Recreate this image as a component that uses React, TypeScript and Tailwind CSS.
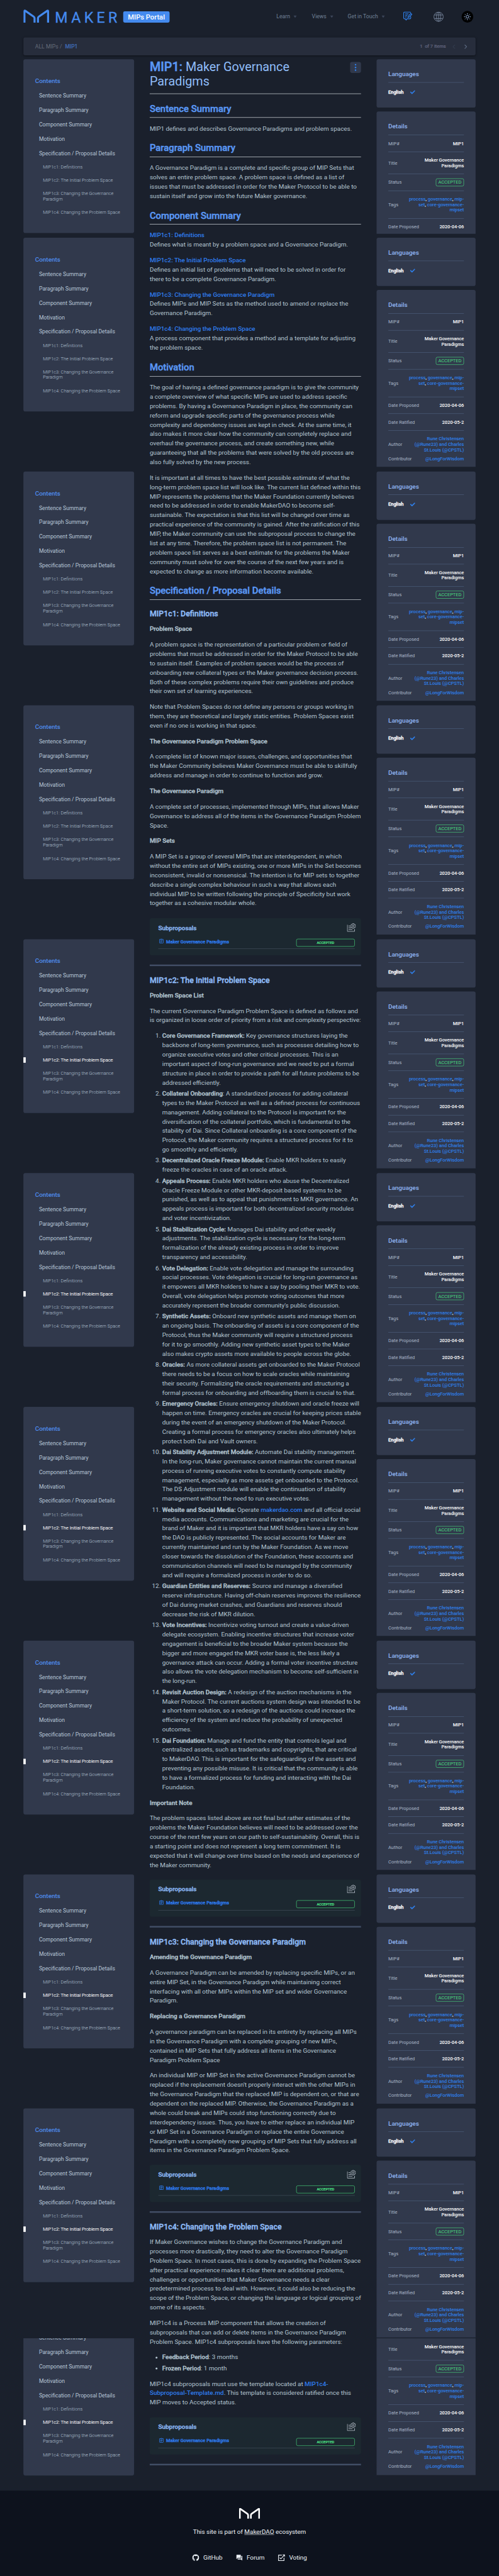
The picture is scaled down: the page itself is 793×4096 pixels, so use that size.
import React from "react";
import { FaCheck, FaGithub } from "react-icons/fa";
import { MdOutlineAssignment, MdForum } from "react-icons/md";

const faux = "font-medium [-webkit-text-stroke:0.5px_currentColor]";

function MakerMark({ className }: { className: string }) {
  return (
    <svg viewBox="0 0 66 34" className={className} fill="none" stroke="currentColor" strokeWidth="5.2">
      <path d="M2.7 34V4.600Q2.700 2.300 4.700 3.600L26.500 18.800Q28.600 20.300 28.600 22.800V34" />
      <path d="M63.300 34V4.600Q63.300 2.300 61.300 3.600L39.500 18.800Q37.400 20.300 37.400 22.800V34" />
    </svg>
  );
}

function NavItem({ label, className }: { label: string; className: string }) {
  return (
    <div className={`flex items-center whitespace-nowrap text-[14px] leading-[20px] text-[#718096] ${className}`}>
      {label}
      <span className="ml-[9px] mt-[2px] h-0 w-0 border-x-[4px] border-t-[6px] border-x-transparent border-t-[#3c4559]" />
    </div>
  );
}

function Header() {
  return (
    <header className="flex h-[96px] items-start pl-[60px]">
      <MakerMark className="mt-[24px] h-[34px] w-[66px] text-[#448aee]" />
      <div className="ml-[15px] mt-[22.600px] w-[175px] whitespace-nowrap text-[37.500px] leading-[45px] tracking-[8.600px] text-[#448aee] [-webkit-text-stroke:0.6px_currentColor]">
        MAKER
      </div>
      <div className="mt-[29px] flex h-[29px] w-[119px] items-center justify-center rounded-[4px] bg-[#448aee] text-[18px] font-medium whitespace-nowrap text-white">
        MIPs Portal
      </div>
      <NavItem label="Learn" className="mt-[32px] ml-[274px] w-[91px]" />
      <NavItem label="Views" className="mt-[32px] w-[92px]" />
      <NavItem label="Get in Touch" className="mt-[32px] w-[142px]" />
      <svg viewBox="0 0 24 24" className="mt-[30px] h-[23px] w-[24px] text-[#2f80ed]" fill="none" stroke="currentColor" strokeWidth="1.9">
        <path d="M20 3.4Q20 1 17.600 1H3.400Q1 1 1 3.400V16.600Q1 19 3.400 19H5.500L7.500 22.500L10 19H17.600Q20 19 20 16.600V13" />
        <path d="M5 6H14M5 10H11M5 14H9" />
        <path d="M13 12.500L20 4.500L23 7L16 14.500L12.500 15.500Z" />
      </svg>
      <svg viewBox="0 0 26 26" className="mt-[30px] ml-[54px] h-[26px] w-[26px] text-[#718096]" fill="none" stroke="currentColor" strokeWidth="1.6">
        <circle cx="13" cy="13" r="12" />
        <ellipse cx="13" cy="13" rx="5.500" ry="12" />
        <path d="M13 1V25M2.500 8.500H23.500M2.500 17.500H23.500" />
      </svg>
      <div className="mt-[28px] ml-[46px] flex h-[30px] w-[30px] items-center justify-center rounded-full bg-black">
        <svg viewBox="0 0 18 18" className="h-[18px] w-[18px] text-[#a9c7f7]" fill="none" stroke="currentColor" strokeWidth="1.5">
          <circle cx="9" cy="9" r="3.500" />
          <path d="M9 0V3M9 15V18M0 9H3M15 9H18M2.600 2.600L4.600 4.600M13.400 13.400L15.400 15.400M2.600 15.400L4.600 13.400M13.400 4.600L15.400 2.600" />
        </svg>
      </div>
    </header>
  );
}

function Breadcrumb() {
  return (
    <div className="mx-[60px] flex h-[46px] items-center rounded-[4px] bg-[#272d3c] pl-[30px] shadow-[0_1px_5px_rgba(0,0,0,0.45)]">
      <span className="text-[14px] text-[#656c79]">ALL MIPs /</span>
      <span className="ml-[8px] text-[13.600px] font-medium text-[#3e66ab] [-webkit-text-stroke:0.4px_currentColor]">MIP1</span>
      <span className="ml-auto w-[67px] text-[12px] font-medium whitespace-pre text-[#5d6079] [-webkit-text-stroke:0.3px_currentColor]">1  of 7 items</span>
      <svg viewBox="0 0 7 12" className="ml-[17px] mt-[1px] h-[12px] w-[7px] text-[#3a4557]" fill="none" stroke="currentColor" strokeWidth="1.6">
        <path d="M6 1L1 6L6 11" />
      </svg>
      <svg viewBox="0 0 7 12" className="mr-[22px] ml-[23px] mt-[1px] h-[12px] w-[7px] text-[#5c6980]" fill="none" stroke="currentColor" strokeWidth="1.8">
        <path d="M1 1L6 6L1 11" />
      </svg>
    </div>
  );
}

const topLinks = ["Sentence Summary", "Paragraph Summary", "Component Summary", "Motivation", "Specification / Proposal Details"];
const subLinks = ["MIP1c1: Definitions", "MIP1c2: The Initial Problem Space", "MIP1c3: Changing the Governance Paradigm", "MIP1c4: Changing the Problem Space"];

function Contents({ active, scrolled }: { active: boolean; scrolled?: boolean }) {
  return (
    <nav className={scrolled ? "h-[352px] overflow-hidden rounded-b-[5px] bg-[#31394c]" : "h-[446px] rounded-[5px] bg-[#31394c] pt-[44px]"}>
      {scrolled ? null : <div className="pl-[30px] text-[16px] leading-[24px] font-medium text-[#4f8df0]">Contents</div>}
      <ul className={`flex flex-col gap-[17px] pl-[40px] text-[14px] leading-[20px] text-[#b8c7d8] ${scrolled ? "mt-[-11.500px]" : "mt-[14.500px]"}`}>
        {topLinks.map((t) => (
          <li key={t}>{t}</li>
        ))}
      </ul>
      <ul className="mt-[18.200px] flex flex-col gap-[20.400px] text-[12px] leading-[14px] font-light text-[#b8c7d8]">
        {subLinks.map((t, i) => (
          <li key={t} className={active && i === 1 ? "flex text-white [-webkit-text-stroke:0.2px_currentColor]" : "flex"}>
            <span className={active && i === 1 ? "h-[14px] w-[6px] bg-white" : "w-[6px]"} />
            <span className="ml-[44px] w-[204px]">{t}</span>
          </li>
        ))}
      </ul>
    </nav>
  );
}

function Row({ label, last, children }: { label: string; last?: boolean; children: React.ReactNode }) {
  return (
    <div className={`flex items-center justify-between py-[14px] ${last ? "" : "border-b border-[#4f6280]"}`}>
      <span className="whitespace-nowrap text-[#a9b6c8]">{label}</span>
      <span className="text-right font-medium text-white">{children}</span>
    </div>
  );
}

const tagLink = "text-[#2f80ed]";
const card = "overflow-hidden bg-[#31394c] px-[30px] text-[12px] leading-[14px]";

function LanguagesCard() {
  return (
    <section className="mb-[10px] h-[124px] rounded-[5px] bg-[#31394c] px-[30px] pt-[27px]">
      <h3 className="border-b border-[#4f6280] pb-[8px] text-[16px] leading-[24px] font-medium text-[#90b6f5]">Languages</h3>
      <div className="mt-[15px] flex items-center text-[12px] leading-[18px] text-white">
        <span className={`w-[56px] ${faux}`}>English</span>
        <FaCheck className="h-[13px] w-[13px] text-[#2f80ed]" />
      </div>
    </section>
  );
}

function DetailsHead() {
  return (
    <>
      <h3 className="border-b border-[#4f6280] pb-[9px] text-[16px] leading-[24px] font-medium text-[#90b6f5]">Details</h3>
      <Row label="MIP#">MIP1</Row>
    </>
  );
}

function DetailsMain() {
  return (
    <>
      <Row label="Title">
        Maker Governance
        <br />
        Paradigms
      </Row>
      <Row label="Status">
        <span className="-my-[3px] flex h-[20px] w-[72px] items-center justify-center rounded-[4px] border border-[#4ade80] font-normal text-[#4ade80]">ACCEPTED</span>
      </Row>
      <Row label="Tags">
        <span className={tagLink}>process</span>, <span className={tagLink}>governance</span>, <span className={tagLink}>mip-</span>
        <br />
        <span className={tagLink}>set</span>, <span className={tagLink}>core-governance-</span>
        <br />
        <span className={tagLink}>mipset</span>
      </Row>
      <Row label="Date Proposed">2020-04-06</Row>
    </>
  );
}

function DetailsRest() {
  return (
    <>
      <Row label="Date Ratified">2020-05-2</Row>
      <Row label="Author" last>
        <span className={tagLink}>
          Rune Christensen
          <br />
          (@Rune23) and Charles
          <br />
          St.Louis (@CPSTL)
        </span>
      </Row>
      <div className="mt-[-5px] flex justify-between">
        <span className="text-[#a9b6c8]">Contributor</span>
        <span className={`font-medium ${tagLink}`}>@LongForWisdom</span>
      </div>
    </>
  );
}

const frames = [1, 2, 3, 4, 5, 6, 7, 8, 9];

function H2({ children }: { children: React.ReactNode }) {
  return (
    <h2 className="mt-[24px] mb-[16px] border-b border-[#edf2f7] pb-[7.400px] text-[24px] leading-[28.800px] font-medium text-[#5a98f5] [-webkit-text-stroke:0.7px_currentColor]">
      {children}
    </h2>
  );
}

function H3({ children }: { children: React.ReactNode }) {
  return <h3 className="mt-[24px] mb-[15.200px] text-[20px] leading-[24px] font-medium text-[#90bdf9] [-webkit-text-stroke:0.6px_currentColor]">{children}</h3>;
}

function Lead({ children }: { children: React.ReactNode }) {
  return <h4 className={`mb-[16px] ${faux}`}>{children}</h4>;
}

function P({ lines }: { lines: React.ReactNode[] }) {
  return (
    <p className="mb-[16px] whitespace-nowrap">
      {lines.map((l, i) => (
        <React.Fragment key={i}>
          {l}
          {i < lines.length - 1 ? <br /> : null}
        </React.Fragment>
      ))}
    </p>
  );
}

function Link({ children }: { children: React.ReactNode }) {
  return <span className="font-medium text-[#2f7df0]">{children}</span>;
}

function Subproposals() {
  return (
    <>
      <div className="mt-[25.600px] h-[95px] rounded-[5px] bg-[#1c2830] pt-[13px] pr-[16px] pl-[22px]">
        <div className="flex h-[24px] justify-between">
          <span className={`text-[16px] leading-[24px] text-[#90bdf9] ${faux}`}>Subproposals</span>
          <svg viewBox="0 0 23 22" className="mr-[-3px] h-[22px] w-[23px] text-[#a9b1bb]" fill="none" stroke="currentColor" strokeWidth="1.600">
            <path d="M1 4V21H19.500V15" />
            <path d="M4 7H9M4 11.500H11M4 16H14" />
            <circle cx="16" cy="7" r="2" />
            <path d="M14.500 1H17.500L18.200 3.100L20.500 2.800L22 5.200L20.700 7L22 8.800L20.500 11.200L18.200 10.900L17.500 13H14.500L13.800 10.900L11.500 11.200L10 8.800L11.300 7L10 5.200L11.500 2.800L13.800 3.100Z" />
          </svg>
        </div>
        <div className="mt-[11px] flex h-[31px] items-start border-b border-[#46525e]">
          <MdOutlineAssignment className="mt-[4px] ml-[1px] h-[14px] w-[14px] text-[#2f7df0]" />
          <span className="ml-[5px] text-[12px] leading-[24px] font-medium text-[#2f7df0] [-webkit-text-stroke:0.5px_currentColor]">Maker Governance Paradigms</span>
          <span className="mt-[5px] ml-auto flex h-[20px] w-[150px] items-center justify-center rounded-[4px] border border-[#4ade80] text-[9px] leading-[12px] font-medium text-[#4ade80] [-webkit-text-stroke:0.4px_currentColor]">
            ACCEPTED
          </span>
        </div>
      </div>
      <div className="mt-[24px] h-[4px] bg-[#424e66]" />
    </>
  );
}

const problems: { title: string; colon?: string; lines: React.ReactNode[] }[] = [
  { title: "Core Governance Framework:", lines: ["Key governance structures laying the", "backbone of long-term governance, such as processes detailing how to", "organize executive votes and other critical processes. This is an", "important aspect of long-run governance and we need to put a formal", "structure in place in order to provide a path for all future problems to be", "addressed efficiently."] },
  { title: "Collateral Onboarding", colon: ":", lines: ["A standardized process for adding collateral", "types to the Maker Protocol as well as a defined process for continuous", "management. Adding collateral to the Protocol is important for the", "diversification of the collateral portfolio, which is fundamental to the", "stability of Dai. Since Collateral onboarding is a core component of the", "Protocol, the Maker community requires a structured process for it to", "go smoothly and efficiently."] },
  { title: "Decentralized Oracle Freeze Module:", lines: ["Enable MKR holders to easily", "freeze the oracles in case of an oracle attack."] },
  { title: "Appeals Process:", lines: ["Enable MKR holders who abuse the Decentralized", "Oracle Freeze Module or other MKR-deposit based systems to be", "punished, as well as to appeal that punishment to MKR governance. An", "appeals process is important for both decentralized security modules", "and voter incentivization."] },
  { title: "Dai Stabilization Cycle:", lines: ["Manages Dai stability and other weekly", "adjustments. The stabilization cycle is necessary for the long-term", "formalization of the already existing process in order to improve", "transparency and accessibility."] },
  { title: "Vote Delegation:", lines: ["Enable vote delegation and manage the surrounding", "social processes. Vote delegation is crucial for long-run governance as", "it empowers all MKR holders to have a say by pooling their MKR to vote.", "Overall, vote delegation helps promote voting outcomes that more", "accurately represent the broader community's public discussion."] },
  { title: "Synthetic Assets:", lines: ["Onboard new synthetic assets and manage them on", "an ongoing basis. The onboarding of assets is a core component of the", "Protocol, thus the Maker community will require a structured process", "for it to go smoothly. Adding new synthetic asset types to the Maker", "also makes crypto assets more available to people across the globe."] },
  { title: "Oracles:", lines: ["As more collateral assets get onboarded to the Maker Protocol", "there needs to be a focus on how to scale oracles while maintaining", "their security. Formalizing the oracle requirements and structuring a", "formal process for onboarding and offboarding them is crucial to that."] },
  { title: "Emergency Oracles:", lines: ["Ensure emergency shutdown and oracle freeze will", "happen on time. Emergency oracles are crucial for keeping prices stable", "during the event of an emergency shutdown of the Maker Protocol.", "Creating a formal process for emergency oracles also ultimately helps", "protect both Dai and Vault owners."] },
  { title: "Dai Stability Adjustment Module:", lines: ["Automate Dai stability management.", "In the long-run, Maker governance cannot maintain the current manual", "process of running executive votes to constantly compute stability", "management, especially as more assets get onboarded to the Protocol.", "The DS Adjustment module will enable the continuation of stability", "management without the need to run executive votes."] },
  { title: "Website and Social Media:", lines: [<>Operate <Link>makerdao.com</Link> and all official social</>, "media accounts. Communications and marketing are crucial for the", "brand of Maker and it is important that MKR holders have a say on how", "the DAO is publicly represented. The social accounts for Maker are", "currently maintained and run by the Maker Foundation. As we move", "closer towards the dissolution of the Foundation, these accounts and", "communication channels will need to be managed by the community", "and will require a formalized process in order to do so."] },
  { title: "Guardian Entities and Reserves:", lines: ["Source and manage a diversified", "reserve infrastructure. Having off-chain reserves improves the resilience", "of Dai during market crashes, and Guardians and reserves should", "decrease the risk of MKR dilution."] },
  { title: "Vote Incentives:", lines: ["Incentivize voting turnout and create a value-driven", "delegate ecosystem. Enabling incentive structures that increase voter", "engagement is beneficial to the broader Maker system because the", "bigger and more engaged the MKR voter base is, the less likely a", "governance attack can occur. Adding a formal voter incentive structure", "also allows the vote delegation mechanism to become self-sufficient in", "the long-run."] },
  { title: "Revisit Auction Design:", lines: ["A redesign of the auction mechanisms in the", "Maker Protocol. The current auctions system design was intended to be", "a short-term solution, so a redesign of the auctions could increase the", "efficiency of the system and reduce the probability of unexpected", "outcomes."] },
  { title: "Dai Foundation:", lines: ["Manage and fund the entity that controls legal and", "centralized assets, such as trademarks and copyrights, that are critical", "to MakerDAO. This is important for the safeguarding of the assets and", "preventing any possible misuse. It is critical that the community is able", "to have a formalized process for funding and interacting with the Dai", "Foundation."] },
];

function Article() {
  return (
    <main className="w-[542px] shrink-0 text-[16px] leading-[24px] text-[#b4c5d1]">
      <div className="flex items-start justify-between border-b border-[#edf2f7] pb-[11px]">
        <h1 className="text-[32px] leading-[38.400px] text-[#90bdf9]">
          <span className="font-medium text-[#5a98f5] [-webkit-text-stroke:0.8px_currentColor]">MIP1:</span> Maker Governance
          <br />
          Paradigms
        </h1>
        <div className="mt-[7px] flex h-[28px] w-[28px] flex-col items-center justify-center gap-[3px] rounded-[5px] bg-[#31394c]">
          <span className="h-[4px] w-[4px] rounded-full bg-[#2f80ed]" />
          <span className="h-[4px] w-[4px] rounded-full bg-[#2f80ed]" />
          <span className="h-[4px] w-[4px] rounded-full bg-[#2f80ed]" />
        </div>
      </div>

      <H2>Sentence Summary</H2>
      <P lines={["MIP1 defines and describes Governance Paradigms and problem spaces."]} />
      <H2>Paragraph Summary</H2>
      <P lines={["A Governance Paradigm is a complete and specific group of MIP Sets that", "solves an entire problem space. A problem space is defined as a list of", "issues that must be addressed in order for the Maker Protocol to be able to", "sustain itself and grow into the future Maker governance."]} />
      <H2>Component Summary</H2>
      <P lines={[<Link>MIP1c1: Definitions</Link>, "Defines what is meant by a problem space and a Governance Paradigm."]} />
      <P lines={[<Link>MIP1c2: The Initial Problem Space</Link>, "Defines an initial list of problems that will need to be solved in order for", "there to be a complete Governance Paradigm."]} />
      <P lines={[<Link>MIP1c3: Changing the Governance Paradigm</Link>, "Defines MIPs and MIP Sets as the method used to amend or replace the", "Governance Paradigm."]} />
      <P lines={[<Link>MIP1c4: Changing the Problem Space</Link>, "A process component that provides a method and a template for adjusting", "the problem space."]} />
      <H2>Motivation</H2>
      <P lines={["The goal of having a defined governance paradigm is to give the community", "a complete overview of what specific MIPs are used to address specific", "problems. By having a Governance Paradigm in place, the community can", "reform and upgrade specific parts of the governance process while", "complexity and dependency issues are kept in check. At the same time, it", "also makes it more clear how the community can completely replace and", "overhaul the governance process, and create something new, while", "guaranteeing that all the problems that were solved by the old process are", "also fully solved by the new process."]} />
      <P lines={["It is important at all times to have the best possible estimate of what the", "long-term problem space list will look like. The current list defined within this", "MIP represents the problems that the Maker Foundation currently believes", "need to be addressed in order to enable MakerDAO to become self-", "sustainable. The expectation is that this list will be changed over time as", "practical experience of the community is gained. After the ratification of this", "MIP, the Maker community can use the subproposal process to change the", "list at any time. Therefore, the problem space list is not permanent. The", "problem space list serves as a best estimate for the problems the Maker", "community must solve for over the course of the next few years and is", "expected to change as more information become available."]} />
      <H2>Specification / Proposal Details</H2>

      <H3>MIP1c1: Definitions</H3>
      <Lead>Problem Space</Lead>
      <P lines={["A problem space is the representation of a particular problem or field of", "problems that must be addressed in order for the Maker Protocol to be able", "to sustain itself. Examples of problem spaces would be the process of", "onboarding new collateral types or the Maker governance decision process.", "Both of these complex problems require their own guidelines and produce", "their own set of learning experiences."]} />
      <P lines={["Note that Problem Spaces do not define any persons or groups working in", "them, they are theoretical and largely static entities. Problem Spaces exist", "even if no one is working in that space."]} />
      <Lead>The Governance Paradigm Problem Space</Lead>
      <P lines={["A complete list of known major issues, challenges, and opportunities that", "the Maker Community believes Maker Governance must be able to skillfully", "address and manage in order to continue to function and grow."]} />
      <Lead>The Governance Paradigm</Lead>
      <P lines={["A complete set of processes, implemented through MIPs, that allows Maker", "Governance to address all of the items in the Governance Paradigm Problem", "Space."]} />
      <Lead>MIP Sets</Lead>
      <P lines={["A MIP Set is a group of several MIPs that are interdependent, in which", "without the entire set of MIPs existing, one or more MIPs in the Set becomes", "inconsistent, invalid or nonsensical. The intention is for MIP sets to together", "describe a single complex behaviour in such a way that allows each", "individual MIP to be written following the principle of Specificity but work", "together as a cohesive modular whole."]} />
      <Subproposals />

      <H3>MIP1c2: The Initial Problem Space</H3>
      <Lead>Problem Space List</Lead>
      <P lines={["The current Governance Paradigm Problem Space is defined as follows and", "is organized in loose order of priority from a risk and complexity perspective:"]} />
      <ol className="mb-[16px] flex flex-col gap-[4px]">
        {problems.map((p, n) => (
          <li key={p.title} className="flex whitespace-nowrap">
            <span className="w-[28px] shrink-0 text-right">{n + 1}.</span>
            <div className="ml-[4px]">
              <strong className={faux}>{p.title}</strong>
              {p.colon}{" "}
              {p.lines.map((l, i) => (
                <React.Fragment key={i}>
                  {l}
                  {i < p.lines.length - 1 ? <br /> : null}
                </React.Fragment>
              ))}
            </div>
          </li>
        ))}
      </ol>
      <Lead>Important Note</Lead>
      <P lines={["The problem spaces listed above are not final but rather estimates of the", "problems the Maker Foundation believes will need to be addressed over the", "course of the next few years on our path to self-sustainability. Overall, this is", "a starting point and does not represent a long term commitment. It is", "expected that it will change over time based on the needs and experience of", "the Maker community."]} />
      <Subproposals />

      <H3>MIP1c3: Changing the Governance Paradigm</H3>
      <Lead>Amending the Governance Paradigm</Lead>
      <P lines={["A Governance Paradigm can be amended by replacing specific MIPs, or an", "entire MIP Set, in the Governance Paradigm while maintaining correct", "interfacing with all other MIPs within the MIP set and wider Governance", "Paradigm."]} />
      <Lead>Replacing a Governance Paradigm</Lead>
      <P lines={["A governance paradigm can be replaced in its entirety by replacing all MIPs", "in the Governance Paradigm with a complete grouping of new MIPs,", "contained in MIP Sets that fully address all items in the Governance", "Paradigm Problem Space"]} />
      <P lines={["An individual MIP or MIP Set in the active Governance Paradigm cannot be", "replaced if the replacement doesn't properly interact with the other MIPs in", "the Governance Paradigm that the replaced MIP is dependent on, or that are", "dependent on the replaced MIP. Otherwise, the Governance Paradigm as a", "whole could break and MIPs could stop functioning correctly due to", "interdependency issues. Thus, you have to either replace an individual MIP", "or MIP Set in a Governance Paradigm or replace the entire Governance", "Paradigm with a completely new grouping of MIP Sets that fully address all", "items in the Governance Paradigm Problem Space."]} />
      <Subproposals />

      <H3>MIP1c4: Changing the Problem Space</H3>
      <P lines={["If Maker Governance wishes to change the Governance Paradigm and", "processes more drastically, they need to alter the Governance Paradigm", "Problem Space. In most cases, this is done by expanding the Problem Space", "after practical experience makes it clear there are additional problems,", "challenges or opportunities that Maker Governance needs a clear", "predetermined process to deal with. However, it could also be reducing the", "scope of the Problem Space, or changing the language or logical grouping of", "some of its aspects."]} />
      <P lines={["MIP1c4 is a Process MIP component that allows the creation of", "subproposals that can add or delete items in the Governance Paradigm", "Problem Space. MIP1c4 subproposals have the following parameters:"]} />
      <ul className="mb-[16px] flex flex-col gap-[4px]">
        {[["Feedback Period", ": 3 months"], ["Frozen Period", ": 1 month"]].map(([a, b]) => (
          <li key={a} className="flex items-center">
            <span className="mr-[12px] ml-[15px] h-[5px] w-[5px] rounded-full bg-[#b4c5d1]" />
            <span>
              <strong className={faux}>{a}</strong>
              {b}
            </span>
          </li>
        ))}
      </ul>
      <P lines={[<>MIP1c4 subproposals must use the template located at <Link>MIP1c4-</Link></>, <><Link>Subproposal-Template.md</Link>. This template is considered ratified once this</>, "MIP moves to Accepted status."]} />
      <Subproposals />
    </main>
  );
}

function Footer() {
  return (
    <footer className="flex h-[219px] flex-col items-center bg-[#0d121d] pt-[44px] text-[16px] leading-[24px] text-[#edf2f7]">
      <MakerMark className="h-[28px] w-[54px] text-white" />
      <div className="mt-[22px]">
        This site is part of <span className="underline">MakerDAO</span> ecosystem
      </div>
      <div className="mt-[42px] flex items-center">
        <FaGithub className="h-[18px] w-[18px]" />
        <span className="ml-[11px] w-[83px]">GitHub</span>
        <MdForum className="h-[18px] w-[18px]" />
        <span className="ml-[10px] w-[80px]">Forum</span>
        <svg viewBox="0 0 18 18" className="h-[18px] w-[18px]" fill="none" stroke="currentColor" strokeWidth="1.800">
          <path d="M10 2.500H1.500V16.500H15.500V9" />
          <path d="M4.500 9L7.500 12L16.500 2M12 1.500H17V6.500" />
        </svg>
        <span className="ml-[11px]">Voting</span>
      </div>
    </footer>
  );
}

export default function App() {
  return (
    <div className="h-[4096px] w-[793px] overflow-hidden bg-[#1a202c]">
      <div className="h-[6610px] w-[1280px] origin-top-left bg-[#1a202c] font-['Roboto',sans-serif] [transform:scale(0.61953,0.61967)]">
        <Header />
        <Breadcrumb />
        <div className="flex h-[6249px] items-start pt-[10px] pl-[60px]">
          <div className="mr-[40px] w-[284px] shrink-0">
            <div className="h-[458px]">
              <Contents active={false} />
            </div>
            {frames.map((f) => (
              <div key={f} className={f === 9 ? "h-[590px]" : "h-[600px]"}>
                <Contents active={f > 3} />
              </div>
            ))}
            <Contents active scrolled />
          </div>
          <Article />
          <div className="ml-[40px] w-[254px] shrink-0">
            <LanguagesCard />
            <section className={`mb-[10px] h-[314px] rounded-t-[5px] pt-[27px] ${card}`}>
              <DetailsHead />
              <DetailsMain />
            </section>
            {frames.map((f) => (
              <div key={f} className={f === 9 ? "h-[590px]" : "h-[600px]"}>
                <LanguagesCard />
                <section className={`h-[454px] rounded-t-[5px] pt-[27px] ${card}`}>
                  <DetailsHead />
                  <DetailsMain />
                  <DetailsRest />
                </section>
              </div>
            ))}
            <section className={`h-[351px] ${card}`}>
              <DetailsMain />
              <DetailsRest />
            </section>
          </div>
        </div>
        <Footer />
      </div>
    </div>
  );
}
